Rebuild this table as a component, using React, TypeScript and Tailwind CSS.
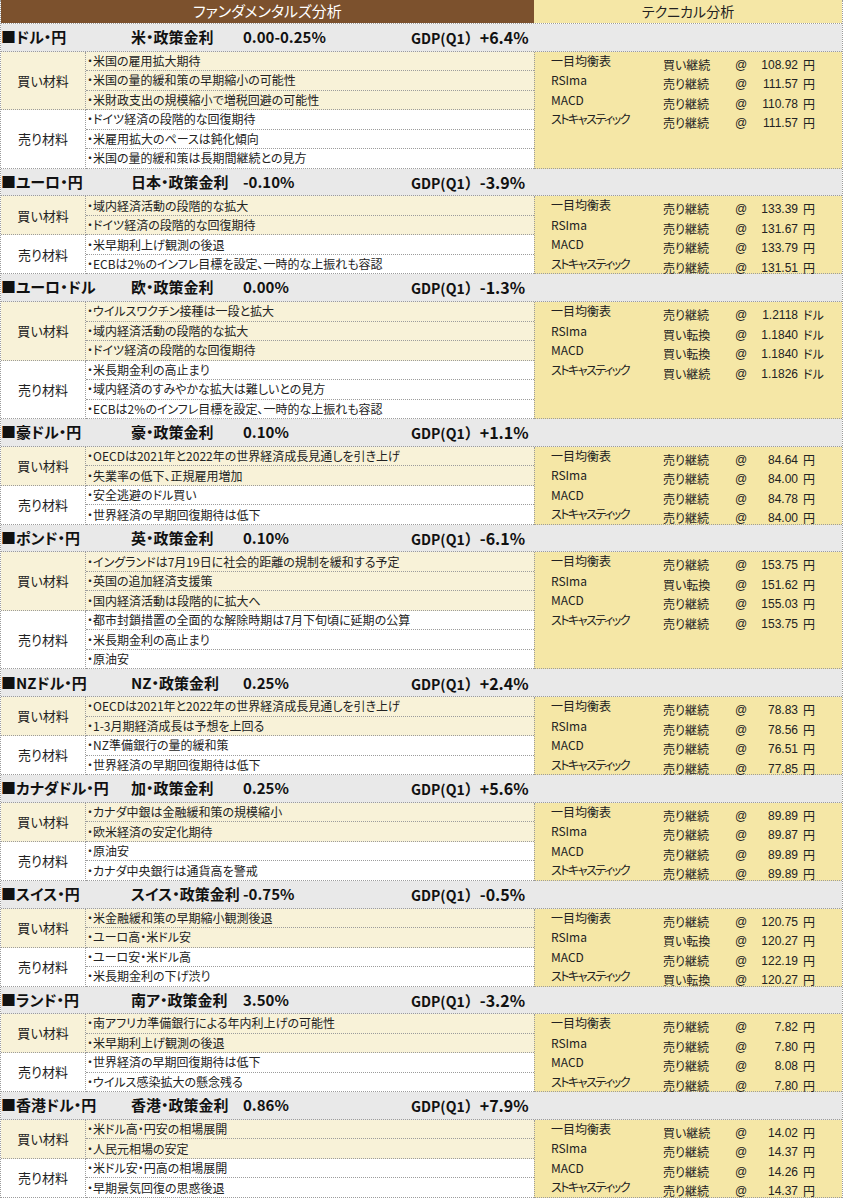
import React from "react";

type Tech = { sig: string; price: string };
type Pair = {
  name: string;
  rateLabel: string;
  rate: string;
  gdp: string;
  buy: string[];
  sell: string[];
  unit: string;
  tech: Tech[];
};

const TECH_NAMES = ["一目均衡表", "RSIma", "MACD", "ストキャスティック"];

const t = (sig: string, price: string): Tech => ({ sig, price });

const PAIRS: Pair[] = [
  {
    name: "■ドル・円",
    rateLabel: "米・政策金利",
    rate: "0.00-0.25%",
    gdp: "+6.4%",
    buy: ["米国の雇用拡大期待", "米国の量的緩和策の早期縮小の可能性", "米財政支出の規模縮小で増税回避の可能性"],
    sell: ["ドイツ経済の段階的な回復期待", "米雇用拡大のペースは鈍化傾向", "米国の量的緩和策は長期間継続との見方"],
    unit: "円",
    tech: [t("買い継続", "108.92"), t("売り継続", "111.57"), t("売り継続", "110.78"), t("売り継続", "111.57")],
  },
  {
    name: "■ユーロ・円",
    rateLabel: "日本・政策金利",
    rate: "-0.10%",
    gdp: "-3.9%",
    buy: ["域内経済活動の段階的な拡大", "ドイツ経済の段階的な回復期待"],
    sell: ["米早期利上げ観測の後退", "ECBは2%のインフレ目標を設定、一時的な上振れも容認"],
    unit: "円",
    tech: [t("売り継続", "133.39"), t("売り継続", "131.67"), t("売り継続", "133.79"), t("売り継続", "131.51")],
  },
  {
    name: "■ユーロ・ドル",
    rateLabel: "欧・政策金利",
    rate: "0.00%",
    gdp: "-1.3%",
    buy: ["ウイルスワクチン接種は一段と拡大", "域内経済活動の段階的な拡大", "ドイツ経済の段階的な回復期待"],
    sell: ["米長期金利の高止まり", "域内経済のすみやかな拡大は難しいとの見方", "ECBは2%のインフレ目標を設定、一時的な上振れも容認"],
    unit: "ドル",
    tech: [t("売り継続", "1.2118"), t("買い転換", "1.1840"), t("買い転換", "1.1840"), t("買い継続", "1.1826")],
  },
  {
    name: "■豪ドル・円",
    rateLabel: "豪・政策金利",
    rate: "0.10%",
    gdp: "+1.1%",
    buy: ["OECDは2021年と2022年の世界経済成長見通しを引き上げ", "失業率の低下、正規雇用増加"],
    sell: ["安全逃避のドル買い", "世界経済の早期回復期待は低下"],
    unit: "円",
    tech: [t("売り継続", "84.64"), t("売り継続", "84.00"), t("売り継続", "84.78"), t("売り継続", "84.00")],
  },
  {
    name: "■ポンド・円",
    rateLabel: "英・政策金利",
    rate: "0.10%",
    gdp: "-6.1%",
    buy: ["イングランドは7月19日に社会的距離の規制を緩和する予定", "英国の追加経済支援策", "国内経済活動は段階的に拡大へ"],
    sell: ["都市封鎖措置の全面的な解除時期は7月下旬頃に延期の公算", "米長期金利の高止まり", "原油安"],
    unit: "円",
    tech: [t("売り継続", "153.75"), t("買い転換", "151.62"), t("売り継続", "155.03"), t("売り継続", "153.75")],
  },
  {
    name: "■NZドル・円",
    rateLabel: "NZ・政策金利",
    rate: "0.25%",
    gdp: "+2.4%",
    buy: ["OECDは2021年と2022年の世界経済成長見通しを引き上げ", "1-3月期経済成長は予想を上回る"],
    sell: ["NZ準備銀行の量的緩和策", "世界経済の早期回復期待は低下"],
    unit: "円",
    tech: [t("売り継続", "78.83"), t("売り継続", "78.56"), t("売り継続", "76.51"), t("売り継続", "77.85")],
  },
  {
    name: "■カナダドル・円",
    rateLabel: "加・政策金利",
    rate: "0.25%",
    gdp: "+5.6%",
    buy: ["カナダ中銀は金融緩和策の規模縮小", "欧米経済の安定化期待"],
    sell: ["原油安", "カナダ中央銀行は通貨高を警戒"],
    unit: "円",
    tech: [t("売り継続", "89.89"), t("売り継続", "89.87"), t("売り継続", "89.89"), t("売り継続", "89.89")],
  },
  {
    name: "■スイス・円",
    rateLabel: "スイス・政策金利",
    rate: "-0.75%",
    gdp: "-0.5%",
    buy: ["米金融緩和策の早期縮小観測後退", "ユーロ高・米ドル安"],
    sell: ["ユーロ安・米ドル高", "米長期金利の下げ渋り"],
    unit: "円",
    tech: [t("売り継続", "120.75"), t("買い転換", "120.27"), t("売り継続", "122.19"), t("買い転換", "120.27")],
  },
  {
    name: "■ランド・円",
    rateLabel: "南ア・政策金利",
    rate: "3.50%",
    gdp: "-3.2%",
    buy: ["南アフリカ準備銀行による年内利上げの可能性", "米早期利上げ観測の後退"],
    sell: ["世界経済の早期回復期待は低下", "ウイルス感染拡大の懸念残る"],
    unit: "円",
    tech: [t("売り継続", "7.82"), t("売り継続", "7.80"), t("売り継続", "8.08"), t("売り継続", "7.80")],
  },
  {
    name: "■香港ドル・円",
    rateLabel: "香港・政策金利",
    rate: "0.86%",
    gdp: "+7.9%",
    buy: ["米ドル高・円安の相場展開", "人民元相場の安定"],
    sell: ["米ドル安・円高の相場展開", "早期景気回復の思惑後退"],
    unit: "円",
    tech: [t("買い継続", "14.02"), t("売り継続", "14.37"), t("売り継続", "14.26"), t("売り継続", "14.37")],
  },
];

// one group of items (買い材料 / 売り材料)
function Group({ label, items, buy }: { label: string; items: string[]; buy: boolean }) {
  return (
    <div className={`flex ${buy ? "bg-[#f8f2d8]" : "bg-white"}`}>
      <div className="flex w-[85px] shrink-0 items-center justify-center border-r border-b border-dotted border-[#9c9c9c] text-[13px] text-[#222]">
        {label}
      </div>
      <div className="flex-1">
        {items.map((it, i) => (
          <div
            key={i}
            className="flex h-[19.5px] items-center whitespace-nowrap border-b border-dotted border-[#9c9c9c] pl-[1px] text-[12px] leading-none text-[#222]"
          >
            ・{it}
          </div>
        ))}
      </div>
    </div>
  );
}

function Section({ p }: { p: Pair }) {
  const rows = p.buy.length + p.sell.length;
  return (
    <div>
      <div className="flex h-[27.7px] items-center border-b border-dotted border-[#9c9c9c] bg-[#e9e9e9] text-[15px] font-bold text-[#111]">
        <div className="w-[130px] shrink-0 whitespace-nowrap">{p.name}</div>
        <div className="flex w-[280px] shrink-0 items-baseline whitespace-nowrap">
          <span className="min-w-[112px]">{p.rateLabel}</span>
          <span>{p.rate}</span>
        </div>
        <div className="flex items-baseline whitespace-nowrap">
          <span className="text-[14px]">GDP(Q1</span>
          <span className="[font-feature-settings:normal]">）</span>
          <span className="text-[16px]">{p.gdp}</span>
        </div>
      </div>
      <div className="flex">
        <div className="w-[533px] shrink-0">
          <Group label="買い材料" items={p.buy} buy />
          <Group label="売り材料" items={p.sell} buy={false} />
        </div>
        <div className="flex-1 border-b border-l border-dotted border-[#9c9c9c] bg-[#f5e7a6]">
          {p.tech.map((x, i) => (
            <div
              key={i}
              className={`flex text-[12px] leading-[12px] text-[#222] ${
                i === 3 && rows === 4 ? "h-[18.5px]" : "h-[19.5px]"
              }`}
            >
              <div
                className={`w-[128px] shrink-0 whitespace-nowrap pl-[16px] pt-[3px] ${
                  i === 3 ? "tracking-[-1.5px]" : ""
                }`}
              >
                {TECH_NAMES[i]}
              </div>
              <div className="w-[72px] shrink-0 whitespace-nowrap pt-[7px]">{x.sig}</div>
              <div className="w-[12px] shrink-0 pt-[7px] font-['Liberation_Sans',sans-serif]">@</div>
              <div className="w-[51px] shrink-0 pt-[7px] text-right font-['Liberation_Sans',sans-serif]">{x.price}</div>
              <div className="whitespace-nowrap pl-[5px] pt-[7px]">{p.unit}</div>
            </div>
          ))}
        </div>
      </div>
    </div>
  );
}

export default function App() {
  return (
    <div className="min-h-[1200px] bg-white font-['Noto_Sans_CJK_JP','Noto_Sans',sans-serif] [font-feature-settings:'palt']">
      <div className="w-[843px] border-x border-dotted border-[#9c9c9c]">
        <div className="flex h-[24px] border-b border-dotted border-[#9c9c9c]">
          <div className="flex w-[533px] shrink-0 items-center justify-center bg-[#7c512d] text-[15px] text-white">
            ファンダメンタルズ分析
          </div>
          <div className="flex flex-1 items-center justify-center bg-[#f5e7a6] text-[14px] text-[#222]">
            テクニカル分析
          </div>
        </div>
        {PAIRS.map((p) => (
          <Section key={p.name} p={p} />
        ))}
      </div>
    </div>
  );
}
